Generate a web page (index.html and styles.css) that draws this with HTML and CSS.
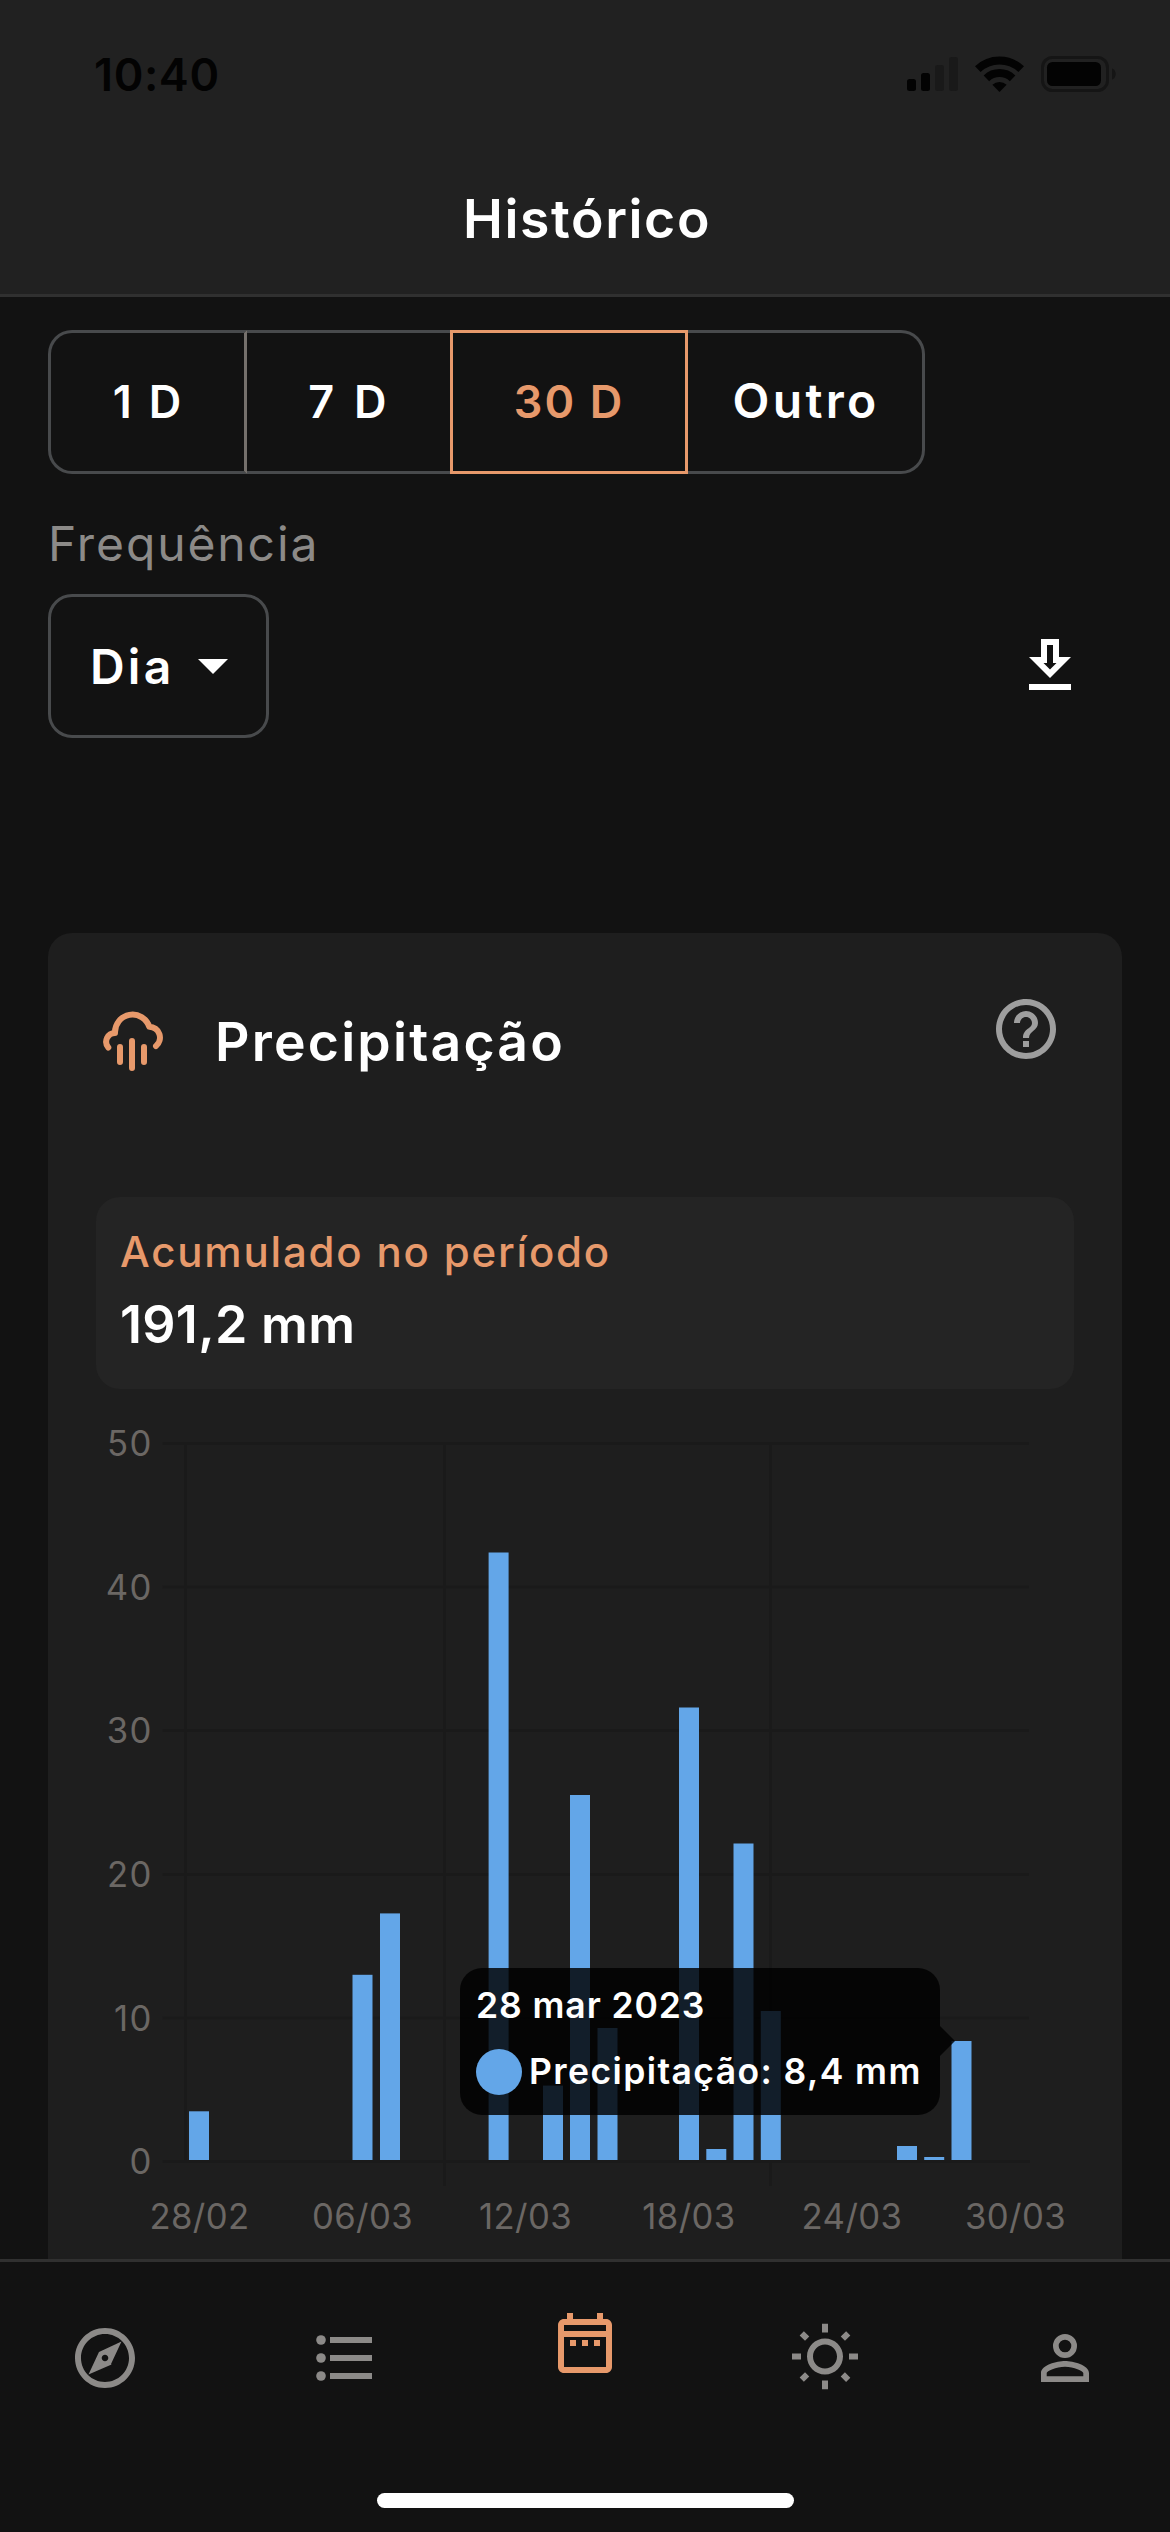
FILE: index.html
```
<!DOCTYPE html>
<html lang="pt-br">
<head>
    <meta charset="UTF-8">
    <meta name="viewport" content="width=device-width, initial-scale=1.0">
    <title>Histórico</title>
    <link rel="stylesheet" href="styles.css">
</head>
<body>

<!-- Cabeçalho -->
<header class="topo">
    <div class="statusBar">
        <span class="hora">10:40</span>
        <div class="statusIcones">
            <svg width="51" height="36" viewBox="0 0 51 36">
                <rect x="0" y="23" width="9" height="12" rx="2.5" fill="#030303"/>
                <rect x="14" y="17" width="9" height="18" rx="2.5" fill="#030303"/>
                <rect x="28" y="9" width="9" height="26" rx="2.5" fill="#191919"/>
                <rect x="42" y="1" width="9" height="34" rx="2.5" fill="#191919"/>
            </svg>
            <svg width="49" height="36" viewBox="0 0 48.6 36" fill="none" stroke="#030303" stroke-width="8">
                <path d="M2.6 13.2A31.5 31.5 0 0 1 46 13.2"/>
                <path d="M11.2 22.3A19 19 0 0 1 37.4 22.3"/>
                <path d="M24.3 36L17.2 28.8A10.2 10.2 0 0 1 31.4 28.8z" fill="#030303" stroke="none"/>
            </svg>
            <svg width="75" height="36" viewBox="0 0 75 36">
                <rect x="1.5" y="1.5" width="65" height="33" rx="10" fill="none" stroke="#151515" stroke-width="3"/>
                <rect x="6" y="6" width="54" height="24" rx="5.5" fill="#030303"/>
                <path d="M71 12.5c5 1.5 5 9.5 0 11z" fill="#151515"/>
            </svg>
        </div>
    </div>
    <h1>Histórico</h1>
</header>

<!-- Conteúdo -->
<main class="conteudo">
    <div class="periodos">
        <button type="button" class="periodo umDia">1 D</button>
        <button type="button" class="periodo seteDias">7 D</button>
        <button type="button" class="periodo ativo">30 D</button>
        <button type="button" class="periodo outro">Outro</button>
    </div>

    <p class="rotulo">Frequência</p>
    <div class="linhaFrequencia">
        <button type="button" class="seletor">
            <span>Dia</span>
            <svg width="30" height="15" viewBox="0 0 30 15"><path d="M0 0h30L15 15z" fill="#fff"/></svg>
        </button>
        <svg class="icone baixar" viewBox="0 0 24 24"><path d="M19 9h-4V3H9v6H5l7 7 7-7zm-8 2V5h2v6h1.17L12 13.17 9.83 11H11zm-6 7h14v2H5z"/></svg>
    </div>

    <section class="cartao">
        <div class="cartaoTopo">
            <svg class="chuva" width="60" height="60" viewBox="0 0 60 60">
                <path d="M6.3 36.5A8.8 8.8 0 0 1 13 22A17.6 17.6 0 0 1 47.3 15.7A10.9 10.9 0 0 1 54 35M18 36v15M30 30v27M42 36v15"/>
            </svg>
            <h2>Precipitação</h2>
            <svg class="icone ajuda" viewBox="0 0 24 24"><path d="M11 18h2v-2h-2v2zm1-16C6.48 2 2 6.48 2 12s4.48 10 10 10 10-4.48 10-10S17.52 2 12 2zm0 18c-4.41 0-8-3.59-8-8s3.59-8 8-8 8 3.59 8 8-3.59 8-8 8zm0-14c-2.21 0-4 1.79-4 4h2c0-1.1.9-2 2-2s2 .9 2 2c0 2-3 1.75-3 5h2c0-2.25 3-2.5 3-5 0-2.21-1.79-4-4-4z"/></svg>
        </div>

        <div class="acumulado">
            <p class="acumuladoTitulo">Acumulado no período</p>
            <p class="acumuladoValor">191,2 mm</p>
        </div>

        <!-- Gráfico de barras -->
        <div class="grafico">
            <svg width="1074" height="870" viewBox="48 1389 1074 870">
                <g class="grade">
                    <path d="M162.5 1443.5H1029M162.5 1587H1029M162.5 1730.5H1029M162.5 1874.5H1029M162.5 2018H1029M162.5 2161.5H1030"/>
                    <path d="M185.5 1443V2162M444.5 1443V2186M770.5 1443V2186"/>
                </g>
                <g class="eixoY">
                    <text x="153" y="1456">50</text>
                    <text x="153" y="1600">40</text>
                    <text x="153" y="1743">30</text>
                    <text x="153" y="1887">20</text>
                    <text x="153" y="2031">10</text>
                    <text x="153" y="2174">0</text>
                </g>
                <g class="eixoX">
                    <text x="199.5" y="2228.5">28/02</text>
                    <text x="362.5" y="2228.5">06/03</text>
                    <text x="525.5" y="2228.5">12/03</text>
                    <text x="689" y="2228.5">18/03</text>
                    <text x="852" y="2228.5">24/03</text>
                    <text x="1015.5" y="2228.5">30/03</text>
                </g>
                <g class="barras">
                    <rect x="189" y="2111.3" width="20" height="48.7"/>
                    <rect x="352.5" y="1974.8" width="20" height="185.2"/>
                    <rect x="380" y="1913.4" width="20" height="246.6"/>
                    <rect x="488.6" y="1552.5" width="20" height="607.5"/>
                    <rect x="543" y="2085.6" width="20" height="74.4"/>
                    <rect x="570" y="1795" width="20" height="365"/>
                    <rect x="597.5" y="2028" width="20" height="132"/>
                    <rect x="679" y="1707.5" width="20" height="452.5"/>
                    <rect x="706.3" y="2149" width="20" height="11"/>
                    <rect x="733.5" y="1843.5" width="20" height="316.5"/>
                    <rect x="760.8" y="2011" width="20" height="149"/>
                    <rect x="897" y="2146" width="20" height="14"/>
                    <rect x="924.2" y="2157" width="20" height="3"/>
                    <rect x="951.5" y="2041" width="20" height="119"/>
                </g>
            </svg>
            <div class="dica">
                <p class="dicaData">28 mar 2023</p>
                <p class="dicaValor"><span class="bolinha"></span>Precipitação: 8,4 mm</p>
            </div>
        </div>
    </section>
</main>

<!-- Menu inferior -->
<nav class="menu">
    <div class="menuItens">
        <svg class="icone" viewBox="0 0 24 24"><path d="M12 10.9c-.61 0-1.1.49-1.1 1.1s.49 1.1 1.1 1.1c.61 0 1.1-.49 1.1-1.1s-.49-1.1-1.1-1.1zM12 2C6.48 2 2 6.48 2 12s4.48 10 10 10 10-4.48 10-10S17.52 2 12 2zm0 18c-4.41 0-8-3.59-8-8s3.59-8 8-8 8 3.59 8 8-3.59 8-8 8zm2.19-5.81L6.5 17.5l3.49-7.51L17.5 6.5l-3.49 7.51z" fill-rule="evenodd"/></svg>
        <svg class="icone" viewBox="0 0 24 24"><path d="M7 5h14v2H7zM7 11h14v2H7zM7 17h14v2H7z"/><circle cx="4" cy="6" r="1.6"/><circle cx="4" cy="12" r="1.6"/><circle cx="4" cy="18" r="1.6"/></svg>
        <svg class="icone selecionado" viewBox="0 0 24 24"><path d="M7 11h2v2H7v-2zm14-5v14c0 1.1-.9 2-2 2H5c-1.11 0-2-.9-2-2l.01-14c0-1.1.88-2 1.99-2h1V2h2v2h8V2h2v2h1c1.1 0 2 .9 2 2zM5 8h14V6H5v2zm14 12V10H5v10h14zm-4-7h2v-2h-2v2zm-4 0h2v-2h-2v2z"/></svg>
        <svg class="icone" viewBox="0 0 24 24"><path d="M6.76 4.84l-1.8-1.79-1.41 1.41 1.79 1.79 1.42-1.41zM4 10.5H1v2h3v-2zm9-9.95h-2V3.5h2V.55zm7.45 3.91l-1.41-1.41-1.79 1.79 1.41 1.41 1.79-1.79zm-3.21 13.7l1.79 1.8 1.41-1.41-1.8-1.79-1.4 1.4zM20 10.5v2h3v-2h-3zm-8-5c-3.31 0-6 2.69-6 6s2.69 6 6 6 6-2.69 6-6-2.69-6-6-6zm0 10c-2.21 0-4-1.79-4-4s1.79-4 4-4 4 1.79 4 4-1.79 4-4 4zm-1 6.95h2V19.5h-2v2.95zm-7.45-3.91l1.41 1.41 1.79-1.8-1.41-1.41-1.79 1.8z"/></svg>
        <svg class="icone" viewBox="0 0 24 24"><path fill-rule="evenodd" d="M12 4a4 4 0 0 1 0 8 4 4 0 0 1 0-8zm0 1.9a2.1 2.1 0 1 0 0 4.2 2.1 2.1 0 0 0 0-4.2zM12 13c2.67 0 8 1.33 8 4v3H4v-3c0-2.67 5.33-4 8-4zm0 1.9c-2.97 0-6.1 1.46-6.1 2.1v1.1h12.2V17c0-.64-3.13-2.1-6.1-2.1z"/></svg>
    </div>
    <div class="indicador"></div>
</nav>

</body>
</html>
```
FILE: styles.css
```
* {
    box-sizing: border-box;
}

body {
    margin: 0;
    width: 1170px;
    height: 2532px;
    overflow: hidden;
    display: flex;
    flex-direction: column;
    font-family: Inter, "Open Sans", sans-serif;
    background-color: #121212;
    color: #fff;
}

h1, h2, p {
    margin: 0;
}

svg {
    display: block;
    flex: none;
}

button {
    font-family: inherit;
    color: inherit;
    background: none;
    border: none;
    padding: 0;
}

.icone {
    width: 72px;
    height: 72px;
    fill: #8c8a88;
}

/* Cabeçalho */
.topo {
    height: 297px;
    flex: none;
    background-color: #212121;
    border-bottom: 3px solid #303030;
}

.statusBar {
    height: 149px;
    padding: 0 54px 0 94px;
    display: flex;
    justify-content: space-between;
    align-items: center;
}

.hora {
    font-size: 45px;
    font-weight: 600;
    letter-spacing: 0.6px;
    color: #030303;
}

.statusIcones {
    display: flex;
    gap: 17px;
    margin-top: -2px;
}

h1 {
    font-size: 53.5px;
    font-weight: 600;
    letter-spacing: 1.6px;
    line-height: 139px;
    text-align: center;
    padding-left: 4px;
}

/* Conteúdo */
.conteudo {
    flex: 1;
    min-height: 0;
    padding: 33px 48px 0;
    overflow: hidden;
}

.periodos {
    display: flex;
    width: 877px;
    height: 144px;
}

.periodo {
    border: 3px solid #484a4c;
    border-left: none;
    border-right: none;
    font-size: 45px;
    font-weight: 600;
}

.umDia {
    width: 199px;
    padding: 0 0 2px 2px;
    border-left: 3px solid #484a4c;
    border-right: 3px solid #75706c;
    border-radius: 24px 0 0 24px;
    letter-spacing: 2.8px;
}

.seteDias {
    width: 203px;
    padding: 0 0 2px 2px;
    letter-spacing: 4.2px;
}

.ativo {
    width: 238px;
    padding-bottom: 2px;
    border: 3px solid #e7996b;
    color: #e7996b;
    letter-spacing: 2.1px;
}

.outro {
    width: 237px;
    padding: 0 0 3px 2px;
    border-right: 3px solid #484a4c;
    border-radius: 0 24px 24px 0;
    font-size: 48px;
    letter-spacing: 3.3px;
}

.rotulo {
    margin-top: 40px;
    font-size: 48px;
    line-height: 60px;
    letter-spacing: 1.9px;
    color: #8c8a88;
}

.linhaFrequencia {
    margin-top: 20px;
    display: flex;
    justify-content: space-between;
    align-items: flex-start;
}

.seletor {
    width: 221px;
    height: 144px;
    padding: 0 38px 0 39px;
    display: flex;
    justify-content: space-between;
    align-items: center;
    border: 3px solid #484a4c;
    border-radius: 24px;
    font-size: 48px;
    font-weight: 600;
    letter-spacing: 3.2px;
}

.baixar {
    margin: 36px 36px 0 0;
    fill: #fff;
}

/* Cartão de precipitação */
.cartao {
    margin-top: 195px;
    height: 1330px;
    background-color: #1e1e1e;
    border-radius: 24px 24px 0 0;
}

.cartaoTopo {
    height: 264px;
    padding: 60px 60px 0 54px;
    display: flex;
    align-items: flex-start;
}

.chuva {
    margin-top: 18px;
    overflow: visible;
    fill: none;
    stroke: #e7996b;
    stroke-width: 6;
    stroke-linecap: round;
    stroke-linejoin: round;
}

h2 {
    margin-left: 53px;
    font-size: 53.5px;
    font-weight: 600;
    letter-spacing: 2.2px;
    line-height: 98px;
}

.ajuda {
    margin-left: auto;
    fill: #9e9e9e;
}

.acumulado {
    height: 192px;
    margin: 0 48px;
    padding: 24px;
    background-color: #242424;
    border-radius: 24px;
}

.acumuladoTitulo {
    font-size: 42px;
    font-weight: 500;
    letter-spacing: 1.8px;
    line-height: 61px;
    color: #e7996b;
}

.acumuladoValor {
    margin-top: 10px;
    font-size: 52px;
    font-weight: 600;
    letter-spacing: 0.3px;
    line-height: 66px;
}

/* Gráfico */
.grafico {
    position: relative;
}

.grade {
    fill: none;
    stroke: #1a1a1a;
    stroke-width: 3;
}

.eixoY, .eixoX {
    font-size: 34.7px;
    fill: #6b6764;
}

.eixoY {
    text-anchor: end;
    letter-spacing: 1.5px;
}

.eixoX {
    text-anchor: middle;
    letter-spacing: 0.4px;
}

.barras {
    fill: #63a6e8;
}

.dica {
    position: absolute;
    left: 412px;
    top: 579px;
    width: 480px;
    height: 147px;
    padding: 16px 15px 0 16px;
    background-color: rgba(0, 0, 0, 0.82);
    border-radius: 22px;
    font-size: 35.5px;
    font-weight: 600;
    white-space: nowrap;
}

.dica::after {
    content: "";
    position: absolute;
    left: 100%;
    top: 58px;
    border: 15px solid transparent;
    border-left-color: rgba(0, 0, 0, 0.82);
    border-right: none;
}

.dicaData {
    line-height: 44px;
    letter-spacing: 0.9px;
}

.dicaValor {
    margin-top: 21px;
    display: flex;
    align-items: center;
    line-height: 44px;
    letter-spacing: 1.4px;
}

.bolinha {
    width: 46px;
    height: 46px;
    margin-right: 7px;
    border-radius: 50%;
    background-color: #63a6e8;
}

/* Menu inferior */
.menu {
    height: 273px;
    flex: none;
    border-top: 3px solid #303030;
}

.menuItens {
    display: flex;
    justify-content: space-between;
    padding: 60px 69px 0;
}

.selecionado {
    margin-top: -15px;
    fill: #e7996b;
}

.indicador {
    width: 417px;
    height: 15px;
    margin: 99px auto 0;
    border-radius: 8px;
    background-color: #fff;
}
```
